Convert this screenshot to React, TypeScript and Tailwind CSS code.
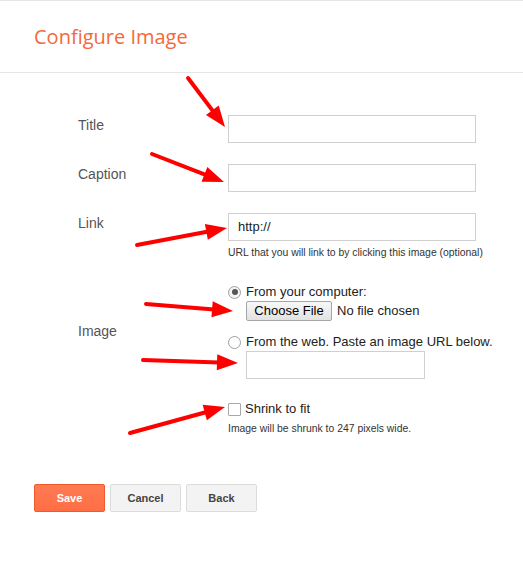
import React from 'react'

// annotation arrows drawn over the form
const ARROWS = [
  { x1: 188, y1: 78, x2: 225, y2: 127 },
  { x1: 152, y1: 154, x2: 224, y2: 182 },
  { x1: 137, y1: 245, x2: 227, y2: 228 },
  { x1: 146, y1: 304, x2: 233, y2: 311 },
  { x1: 143, y1: 360, x2: 238, y2: 363 },
  { x1: 130, y1: 433, x2: 225, y2: 407 },
]

function Arrow({ x1, y1, x2, y2 }: { x1: number; y1: number; x2: number; y2: number }) {
  const dx = x2 - x1
  const dy = y2 - y1
  const len = Math.hypot(dx, dy)
  const ux = dx / len
  const uy = dy / len
  const hl = 21
  const hw = 8
  const bx = x2 - ux * hl
  const by = y2 - uy * hl
  const pts = `${x2},${y2} ${bx - uy * hw},${by + ux * hw} ${bx + uy * hw},${by - ux * hw}`
  return (
    <g>
      <line x1={x1} y1={y1} x2={bx + ux * 2} y2={by + uy * 2} stroke="#ff0000" strokeWidth={4} strokeLinecap="round" />
      <polygon points={pts} fill="#ff0000" />
    </g>
  )
}

function TextInput({ value, className = 'w-[248px]' }: { value?: string; className?: string }) {
  return (
    <div className={`h-[28px] border border-[#d0d0d0] bg-white flex items-center pl-[9px] text-[13px] text-[#222] ${className}`}>
      {value}
    </div>
  )
}

function Label({ children }: { children: React.ReactNode }) {
  return <div className="w-[150px] shrink-0 pt-[2px] text-[14px] leading-[16px] text-[#555]">{children}</div>
}

export default function App() {
  return (
    <div className="relative w-[523px] h-[585px] bg-white" style={{ fontFamily: '"Liberation Sans", Arial, sans-serif' }}>
      {/* Header */}
      <div className="h-[73px] border-t border-b border-[#e5e5e5] flex items-center pl-[34px]">
        <h1 className="text-[20px] text-[#f4693c]" style={{ fontFamily: '"Open Sans", sans-serif' }}>
          Configure Image
        </h1>
      </div>

      {/* Form */}
      <div className="pt-[42px] pl-[78px]">
        <div className="flex items-start">
          <Label>Title</Label>
          <TextInput />
        </div>
        <div className="flex items-start mt-[21px]">
          <Label>Caption</Label>
          <TextInput />
        </div>
        <div className="flex items-start mt-[21px]">
          <Label>Link</Label>
          <div>
            <TextInput value="http://" />
            <div className="mt-[6px] text-[10.4px] leading-[12px] text-[#333]">
              URL that you will link to by clicking this image (optional)
            </div>
          </div>
        </div>

        <div className="flex items-center mt-[24px]">
          <div className="w-[150px] shrink-0 text-[14px] text-[#555]">Image</div>
          <div className="text-[13px] text-[#222]">
            <div className="flex items-center h-[18px]">
              <span className="w-[13px] h-[13px] rounded-full border border-[#a0a0a0] bg-[#f4f4f4] flex items-center justify-center">
                <span className="w-[6px] h-[6px] rounded-full bg-[#555]" />
              </span>
              <span className="ml-[5px]">From your computer:</span>
            </div>
            <div className="flex items-center ml-[18px]">
              <span className="h-[20px] w-[86px] flex items-center justify-center border border-[#a6a6a6] rounded-[2px] bg-gradient-to-b from-[#f8f8f8] to-[#e2e2e2] text-black">
                Choose File
              </span>
              <span className="ml-[5px]">No file chosen</span>
            </div>
            <div className="flex items-center h-[18px] mt-[12px]">
              <span className="w-[13px] h-[13px] rounded-full border border-[#a0a0a0] bg-white" />
              <span className="ml-[5px]">From the web. Paste an image URL below.</span>
            </div>
            <TextInput className="w-[179px] ml-[18px]" />
          </div>
        </div>

        <div className="flex mt-[21px]">
          <div className="w-[150px] shrink-0" />
          <div>
            <div className="flex items-center h-[18px] text-[13px] text-[#222]">
              <span className="w-[13px] h-[13px] border border-[#a9a9a9] rounded-[1px] bg-white" />
              <span className="ml-[4px]">Shrink to fit</span>
            </div>
            <div className="mt-[5px] text-[10.4px] leading-[12px] text-[#333]">
              Image will be shrunk to 247 pixels wide.
            </div>
          </div>
        </div>
      </div>

      {/* Buttons */}
      <div className="flex gap-[5px] pl-[34px] mt-[49px]">
        <button className="w-[71px] h-[28px] border border-[#ef5a2a] rounded-[2px] bg-gradient-to-b from-[#ff7a52] to-[#ff6e45] text-white text-[11px] font-bold">
          Save
        </button>
        <button className="w-[71px] h-[28px] border border-[#dcdcdc] rounded-[2px] bg-[#f3f3f3] text-[#444] text-[11px] font-bold">
          Cancel
        </button>
        <button className="w-[71px] h-[28px] border border-[#dcdcdc] rounded-[2px] bg-[#f3f3f3] text-[#444] text-[11px] font-bold">
          Back
        </button>
      </div>

      <svg className="absolute inset-0 pointer-events-none" width={523} height={585}>
        {ARROWS.map((a, i) => <Arrow key={i} {...a} />)}
      </svg>
    </div>
  )
}
